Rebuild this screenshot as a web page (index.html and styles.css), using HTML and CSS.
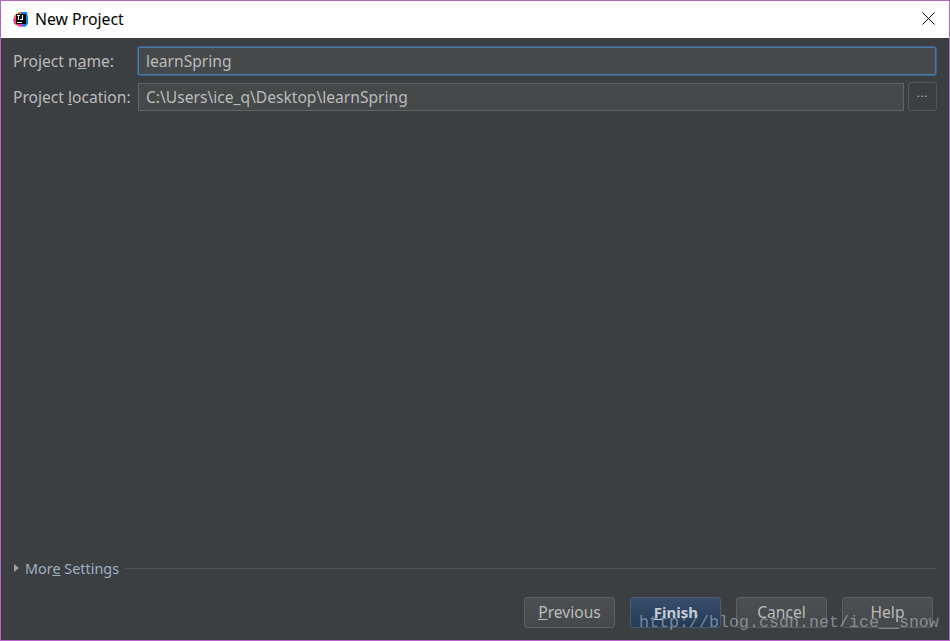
FILE: index.html
```html
<!DOCTYPE html>
<html lang="en">
<head>
    <meta charset="UTF-8">
    <title>New Project</title>
    <link rel="stylesheet" href="styles.css">
</head>
<body>
<div class="window">
    <div class="titlebar">
        <svg class="appicon" width="16" height="16" viewBox="0 0 16 16">
            <path d="M2 5 L7 1 L9 1 L9 8 L4 14 L2 12 Z" fill="#f5792a"/>
            <path d="M1 8 L4 6 L5 14 L2 13 Z" fill="#f0478c"/>
            <path d="M9 1 L15 1 L16 7 L16 13 L13 16 L8 15 Z" fill="#127fee"/>
            <path d="M4 13 L11 13 L10 16 L5 15 Z" fill="#e8409a"/>
            <rect x="4" y="3" width="10" height="10" fill="#0a0a0a"/>
            <rect x="5" y="11" width="5" height="1" fill="#fff"/>
            <rect x="5" y="4" width="3" height="1" fill="#fff"/>
            <rect x="6" y="4" width="1" height="5" fill="#fff"/>
            <rect x="10" y="4" width="1" height="5" fill="#fff"/>
            <rect x="8" y="8" width="2" height="1" fill="#fff"/>
        </svg>
        <span class="title">New Project</span>
        <svg class="closeicon" width="13" height="13" viewBox="0 0 13 13">
            <path d="M0.5 0.5 L12.5 12.5 M12.5 0.5 L0.5 12.5" stroke="#000" stroke-width="1" fill="none"/>
        </svg>
    </div>
    <div class="content">
        <div class="row row-name">
            <label class="rowlabel">Project n<u>a</u>me:</label>
            <div class="field field-focus">learnSpring</div>
        </div>
        <div class="row row-location">
            <label class="rowlabel">Project <u>l</u>ocation:</label>
            <div class="field">C:\Users\ice_q\Desktop\learnSpring</div>
            <div class="browsebtn">...</div>
        </div>
        <div class="spacer"></div>
        <div class="more">
            <span class="arrow"></span>
            <span class="moretext">Mor<u>e</u> Settings</span>
            <span class="moreline"></span>
        </div>
        <div class="btnrow">
            <div class="btn"><u>P</u>revious</div>
            <div class="btn btn-default"><u>F</u>inish</div>
            <div class="btn">Cancel</div>
            <div class="btn">Help</div>
        </div>
    </div>
    <div class="watermark">http://blog.csdn.net/ice__snow</div>
</div>
</body>
</html>
```

FILE: styles.css
```css
*{
    box-sizing: border-box;
}
html,body{
    margin:0;
    padding:0;
}
body{
    font-family: "Noto Sans", "Noto Sans CJK SC", sans-serif;
    font-size:15.6px;
}
.window{
    width:950px;
    height:641px;
    border:1px solid #b763ca;
    position: relative;
    display:flex;
    flex-direction:column;
    overflow: hidden;
}
.titlebar{
    height:37px;
    background:#fff;
    display:flex;
    align-items:center;
    padding:0 15px 2px 11px;
    flex-shrink:0;
}
.appicon{
    margin-right:7px;
}
.title{
    color:#000;
    flex:1;
    font-size:15.8px;
}
.closeicon{
    display:block;
    margin-right:-1px;
}
.content{
    flex:1;
    background:#3c3f41;
    display:flex;
    flex-direction:column;
    padding:9px 12px 12px 12px;
    color:#bbbbbb;
}
.row{
    display:flex;
    align-items:center;
}
.row-name{
    height:28px;
}
.row-location{
    height:29px;
    margin-top:7px;
}
.rowlabel{
    width:125px;
    flex-shrink:0;
}
.field{
    height:28px;
    line-height:26px;
    flex:1;
    background:#45494a;
    border:1px solid #646464;
    padding:0 7px;
}
.field-focus{
    border:1px solid #4a78a8;
    box-shadow:0 0 0 1px #3d5f85;
    border-radius:2px;
    margin-right:1px;
}
.browsebtn{
    width:29px;
    height:29px;
    margin-left:4px;
    border:1px solid #555859;
    border-radius:3px;
    text-align:center;
    line-height:21px;
    font-size:10px;
    letter-spacing:1px;
    color:#d0d0d0;
}
.spacer{
    flex:1;
}
.more{
    display:flex;
    align-items:center;
    height:20px;
    color:#9fb1c2;
    font-size:14.4px;
}
.arrow{
    width:0;
    height:0;
    border-left:5px solid #a0a0a0;
    border-top:4px solid transparent;
    border-bottom:4px solid transparent;
    margin:0 6px 0 1px;
}
.moreline{
    flex:1;
    height:1px;
    background:#515355;
    margin-left:6px;
}
.btnrow{
    display:flex;
    justify-content:flex-end;
    gap:15px;
    margin-top:19px;
    padding-right:4px;
}
.btn{
    width:91px;
    height:31px;
    line-height:29px;
    text-align:center;
    border:1px solid #5e6060;
    border-radius:3px;
    background:linear-gradient(#4d5052,#45484a);
}
.btn-default{
    background:linear-gradient(#384f6b,#233a56);
    border-color:#4c5a6b;
    font-weight:bold;
    font-size:15px;
    padding-left:1px;
    color:#c4ccd6;
}
.watermark{
    position:absolute;
    left:638px;
    top:612px;
    font-family:"Liberation Mono", monospace;
    font-size:16.67px;
    line-height:20px;
    white-space:nowrap;
    color:rgba(190,200,210,0.55);
}
```
